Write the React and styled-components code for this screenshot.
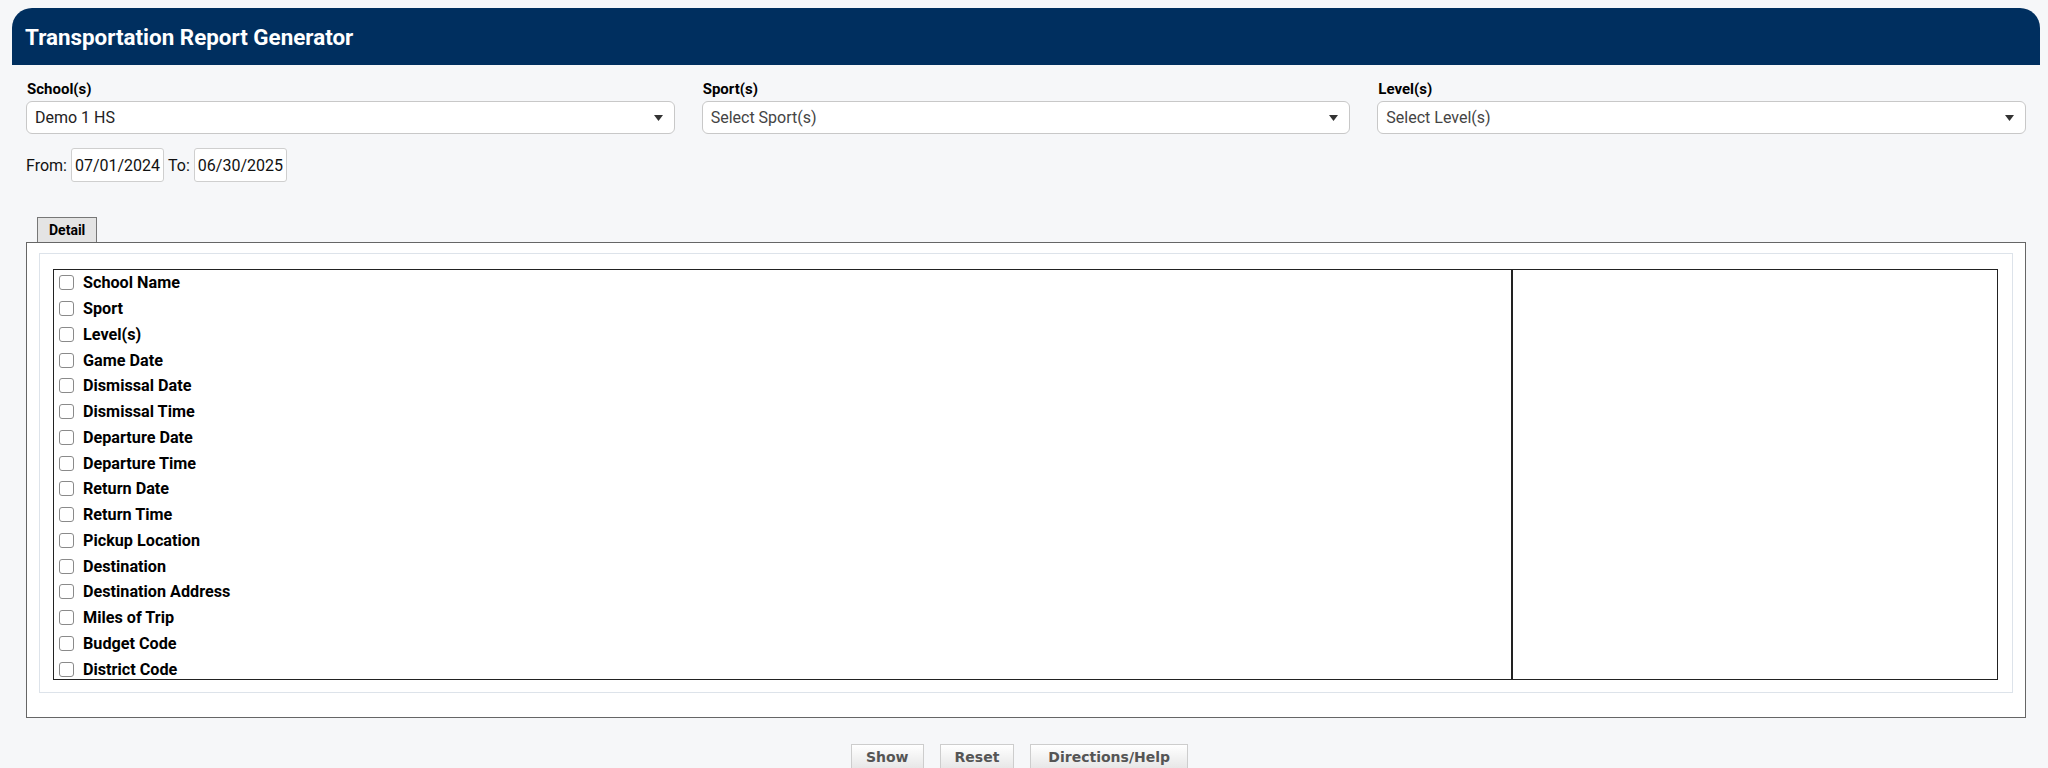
import React from 'react';
import styled, { createGlobalStyle } from 'styled-components';

const GlobalStyle = createGlobalStyle`
  html, body {
    margin: 0;
    padding: 0;
    background: #f6f7f9;
    font-family: Roboto, "Liberation Sans", Arial, sans-serif;
    color: #000;
  }
`;

const Page = styled.div`
  margin: 8px 8px 0 12px;
`;

const Header = styled.header`
  height: 57px;
  background: #002f5f;
  border-radius: 20px 20px 0 0;
  display: flex;
  align-items: center;
  padding: 0 13px;
  h1 {
    margin: 0;
    color: #fff;
    font-size: 22.4px;
    font-weight: 700;
  }
`;

const Content = styled.div`
  padding: 15px 14px 0;
`;

const Filters = styled.div`
  display: grid;
  grid-template-columns: repeat(3, 1fr);
  column-gap: 27px;
`;

const Field = styled.div`
  display: flex;
  flex-direction: column;
  gap: 3px;
`;

const Label = styled.label`
  font-size: 15px;
  font-weight: 700;
  line-height: 18px;
  padding-left: 1px;
`;

const Select = styled.div`
  height: 31px;
  border: 1px solid #c8c8c8;
  border-radius: 6px;
  background: #fff;
  display: flex;
  align-items: center;
  justify-content: space-between;
  padding: 0 11px 0 8px;
  font-size: 16px;
  color: ${(p) => (p.$placeholder ? '#444' : '#222')};
`;

const DateRow = styled.div`
  display: flex;
  align-items: center;
  gap: 4px;
  margin-top: 14px;
  font-size: 16px;
  color: #111;
`;

const DateInput = styled.div`
  height: 32px;
  border: 1px solid #cfcfcf;
  border-radius: 3px;
  background: #fff;
  display: flex;
  align-items: center;
  padding: 0 3px;
  font-size: 16px;
`;

const Tabs = styled.div`
  display: flex;
  margin: 35px 0 0 11px;
`;

const Tab = styled.div`
  height: 24px;
  padding: 0 11px;
  background: #e4e4e4;
  border: 1px solid #777;
  border-bottom: none;
  display: flex;
  align-items: center;
  font-size: 14px;
  font-weight: 700;
`;

const Panel = styled.div`
  border: 1px solid #666;
  background: #fff;
  padding: 10px 12px 24px;
`;

const Inner = styled.div`
  border: 1px solid #dde3ea;
  padding: 15px 14px 12px 13px;
`;

const Table = styled.div`
  display: grid;
  grid-template-columns: 1459px 1fr;
  border: 1px solid #222;
  height: 409px;
`;

const FieldList = styled.div`
  border-right: 2px solid #222;
  overflow: hidden;
  padding: 0 0 0 5px;
`;

const CheckRow = styled.label`
  display: flex;
  align-items: center;
  gap: 9px;
  height: 25.75px;
  font-size: 16.2px;
  font-weight: 700;
`;

const Box = styled.span`
  width: 13px;
  height: 13px;
  border: 1.5px solid #8a8a8a;
  border-radius: 3px;
  background: #fff;
`;

const Buttons = styled.div`
  display: flex;
  justify-content: center;
  gap: 16px;
  margin-top: 26px;
  padding-right: 13px;
`;

const Button = styled.button`
  height: 30px;
  padding: 4px ${(p) => (p.$wide ? 17 : 14)}px 0;
  border: 1px solid #cdcdcd;
  background: linear-gradient(#ffffff, #e2e2e2);
  color: #555;
  font-family: "DejaVu Sans", Verdana, sans-serif;
  font-size: 14px;
  font-weight: 700;
  display: flex;
  align-items: flex-start;
`;

const Caret = () => (
  <svg width="9" height="6" viewBox="0 0 9 6">
    <path d="M0 0 H9 L4.5 6 Z" fill="#333" />
  </svg>
);

const fields = [
  'School Name',
  'Sport',
  'Level(s)',
  'Game Date',
  'Dismissal Date',
  'Dismissal Time',
  'Departure Date',
  'Departure Time',
  'Return Date',
  'Return Time',
  'Pickup Location',
  'Destination',
  'Destination Address',
  'Miles of Trip',
  'Budget Code',
  'District Code',
];

function App() {
  return (
    <>
      <GlobalStyle />
      <Page>
        <Header>
          <h1>Transportation Report Generator</h1>
        </Header>
        <Content>
          <Filters>
            <Field>
              <Label>School(s)</Label>
              <Select>Demo 1 HS<Caret /></Select>
            </Field>
            <Field>
              <Label>Sport(s)</Label>
              <Select $placeholder>Select Sport(s)<Caret /></Select>
            </Field>
            <Field>
              <Label>Level(s)</Label>
              <Select $placeholder>Select Level(s)<Caret /></Select>
            </Field>
          </Filters>

          <DateRow>
            From:
            <DateInput>07/01/2024</DateInput>
            To:
            <DateInput>06/30/2025</DateInput>
          </DateRow>

          <Tabs>
            <Tab>Detail</Tab>
          </Tabs>
          <Panel>
            <Inner>
              <Table>
                <FieldList>
                  {fields.map((f) => (
                    <CheckRow key={f}>
                      <Box />
                      {f}
                    </CheckRow>
                  ))}
                </FieldList>
                <div />
              </Table>
            </Inner>
          </Panel>

          <Buttons>
            <Button>Show</Button>
            <Button>Reset</Button>
            <Button $wide>Directions/Help</Button>
          </Buttons>
        </Content>
      </Page>
    </>
  );
}

export default App;
